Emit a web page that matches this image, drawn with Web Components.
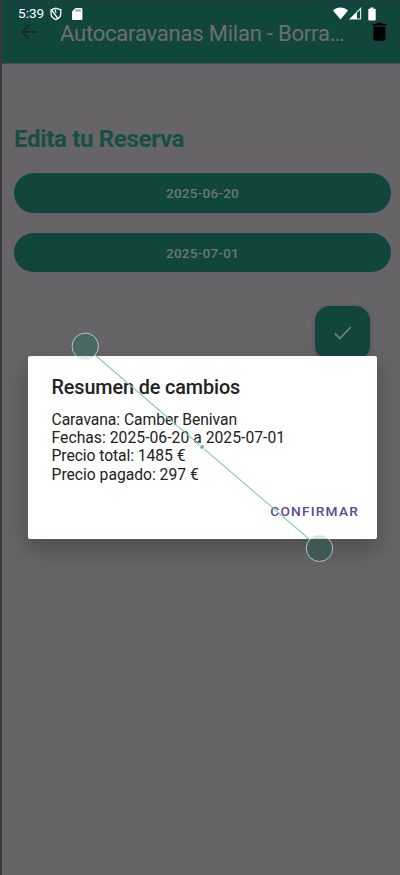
<!DOCTYPE html>
<html lang="es"><head><meta charset="utf-8"><title>Reserva</title>
<style>html,body{margin:0;height:100%;overflow:hidden}body{font-family:Roboto,sans-serif;background:#676467}</style></head>
<body><booking-screen></booking-screen>
<script>
const define=(name,html)=>customElements.define(name,class extends HTMLElement{
  constructor(){super();this.attachShadow({mode:'open'}).innerHTML=html;}
});
define('status-bar',`<style>
:host{display:flex;align-items:center;height:25px;padding:0 23px 0 16px;box-sizing:border-box;color:#fff;font-size:13.5px}
span{width:31px;letter-spacing:.05px;line-height:24px;height:25px}svg{display:block}.gap{flex:1}
</style><span>5:39</span>
<svg width="14" height="14" viewBox="0 0 14 14" fill="none" stroke="#fff" stroke-width="1.3"><path d="M6.9 1.1 2 2.8v3.6c0 2.7 1.8 4.8 4.9 6.2 3.1-1.4 4.9-3.5 4.9-6.2V2.8Z"/><path d="M2.6 3 8.8 11.4M6.6 2.4q-.8 2 .6 3.4"/></svg>
<svg style="margin-left:9px" width="11" height="12" viewBox="0 0 11 12"><path fill="#fff" d="M3.5 0H9.3Q10.4 0 10.4 1.1V10.8Q10.4 12 9.3 12H1.2Q0 12 0 10.8V3.5Z"/><path d="M4 1.5v2M6 1.5v2M8 1.5v2" stroke="#11463f" stroke-width=".9"/></svg>
<i class="gap"></i>
<svg width="15" height="13" viewBox="0 0 15 13"><path fill="#fff" d="M0 3.5C4-.6 11-.6 15 3.5L7.5 12.5Z"/></svg>
<svg style="margin-left:1px" width="13" height="13" viewBox="0 0 13 13"><path fill="none" stroke="#d5e2e0" stroke-width="1.2" d="M1.3 11.9 11.6 1.5V11.9Z"/><path fill="#fff" d="M8 5v7H1Z"/><path fill="#11463f" d="M8.2 5.5h2.6v5.8H8.2z" opacity=".8"/></svg>
<svg style="margin-left:6px;margin-right:1px" width="8" height="14" viewBox="0 0 8 14"><path fill="#fff" d="M2.3.5h3v1.3H7q.7 0 .7.7V12.7q0 .7-.7.7H1q-.7 0-.7-.7V2.5q0-.7.7-.7h1.3Z"/></svg>`);
define('app-bar',`<style>
:host{display:block;height:64px;box-sizing:border-box;background:#11463f;border-top:1px solid #263f3e;border-bottom:1px solid #39534f}
.row{display:flex;align-items:center;height:25px;margin-top:-5px;padding:0 13px 0 17px}
.t{margin-left:22px;flex:1;font-size:22px;letter-spacing:-.21px;line-height:25px;white-space:nowrap;color:#6b6f70}
svg{display:block}.back{position:relative;top:-2px}.bin{position:relative;top:-2px}
</style><status-bar></status-bar><div class="row">
<svg class="back" width="19" height="17" viewBox="0 0 19 17" fill="none" stroke="#17292b" stroke-width="1.8"><path d="M18 9H3.8M10 1.9 3.1 9l6.9 7"/></svg>
<div class="t">Autocaravanas Milan - Borra…</div>
<svg class="bin" width="15" height="20" viewBox="0 0 15 20"><path d="M.5 2h3.8l1-1.2h4.3l1 1.2h3.9v1.6H.5ZM1.4 4.5h12v12.3q0 1.9-1.9 1.9H3.3q-1.9 0-1.9-1.9Z"/></svg></div>`);
define('pill-button',`<style>
:host{display:flex;align-items:center;justify-content:center;height:40px;border-radius:20px;background:#11463f;color:#6b7774;font-size:13.5px;font-weight:500;letter-spacing:.25px}
</style><slot></slot>`);
define('check-button',`<style>
:host{display:flex;align-items:center;justify-content:center;width:55px;height:54px;border-radius:15px;background:#11463f;box-shadow:0 1px 4px #4a4a4c}
</style><svg width="20" height="16" viewBox="0 0 20 16"><path d="m1.8 8.5 5 5L17.8 2.2" fill="none" stroke="#6d7c7a" stroke-width="1.8"/></svg>`);
define('confirm-dialog',`<style>
:host{position:absolute;left:28px;top:356px;width:349px;height:183px;box-sizing:border-box;background:#fff;border-radius:2px;padding:20px 18px 0 23.5px;color:#222;box-shadow:0 9px 20px 2px rgba(0,0,0,.22)}
h2{margin:0;font-size:19.8px;line-height:24px;font-weight:500;letter-spacing:-.1px;white-space:nowrap}
.body{margin-top:11px;font-size:15.7px;line-height:18.2px;white-space:nowrap}
.a{margin-top:18.5px;text-align:right;color:#5b4a96;font-weight:500;font-size:13.7px;line-height:18px;letter-spacing:1.2px}
</style><h2><slot name="title"></slot></h2><div class="body"><slot></slot></div><div class="a"><slot name="action"></slot></div>`);
define('detail-line',`<style>:host{display:block;letter-spacing:var(--track,-.07px)}</style><slot></slot>`);
define('pinch-guide',`<style>:host{position:absolute;inset:0;pointer-events:none}svg{display:block}</style>
<svg width="400" height="875" viewBox="0 0 400 875"><defs>
<linearGradient id="a" gradientUnits="userSpaceOnUse" x1="0" x2="0" y1="332" y2="360"><stop offset=".857" stop-color="#4b6864"/><stop offset=".858" stop-color="#d9ece9"/></linearGradient>
<linearGradient id="b" gradientUnits="userSpaceOnUse" x1="0" x2="0" y1="534" y2="562"><stop offset=".178" stop-color="#d2e5e1"/><stop offset=".179" stop-color="#415754"/></linearGradient>
<linearGradient id="c" gradientUnits="userSpaceOnUse" x1="0" x2="0" y1="332" y2="360"><stop offset=".857" stop-color="#a5cbc4"/><stop offset=".858" stop-color="#e6f3f0"/></linearGradient>
<linearGradient id="d" gradientUnits="userSpaceOnUse" x1="0" x2="0" y1="534" y2="562"><stop offset=".178" stop-color="#e6f3f0"/><stop offset=".179" stop-color="#a5cbc4"/></linearGradient></defs>
<path d="M95 355 309 539" stroke="#86cbbc" stroke-width="1.1"/><circle cx="202" cy="447" r="3" fill="#fff"/><circle cx="202" cy="447" r="2" fill="#70b7a8"/>
<circle cx="85.3" cy="346.3" r="13.2" fill="url(#a)" stroke="url(#c)"/><circle cx="319.5" cy="548.3" r="13.2" fill="url(#b)" stroke="url(#d)"/></svg>`);
define('booking-screen',`<style>
:host{display:block;position:relative;width:400px;height:875px;box-sizing:border-box;border-left:2px solid #39373a;background:#676467;overflow:hidden}
main{padding:60px 9px 0 12px}h1{margin:0 0 19px;font-size:24px;line-height:30px;font-weight:700;letter-spacing:-.31px;color:#174f46}
pill-button+pill-button{margin-top:20px;height:39px}.end{display:flex;justify-content:flex-end;margin:34px 21px 0 0}
.over{position:absolute;left:-2px;top:0;width:400px;height:875px}
</style><app-bar></app-bar><main><h1>Edita tu Reserva</h1>
<pill-button>2025-06-20</pill-button><pill-button>2025-07-01</pill-button><div class="end"><check-button></check-button></div></main>
<div class="over"><confirm-dialog><span slot="title">Resumen de cambios</span>
<detail-line>Caravana: Camber Benivan</detail-line>
<detail-line style="--track:.03px">Fechas: 2025-06-20 a 2025-07-01</detail-line>
<detail-line>Precio total: 1485 €</detail-line>
<detail-line style="--track:-.02px">Precio pagado: 297 €</detail-line>
<span slot="action">CONFIRMAR</span></confirm-dialog><pinch-guide></pinch-guide></div>`);
</script></body></html>
